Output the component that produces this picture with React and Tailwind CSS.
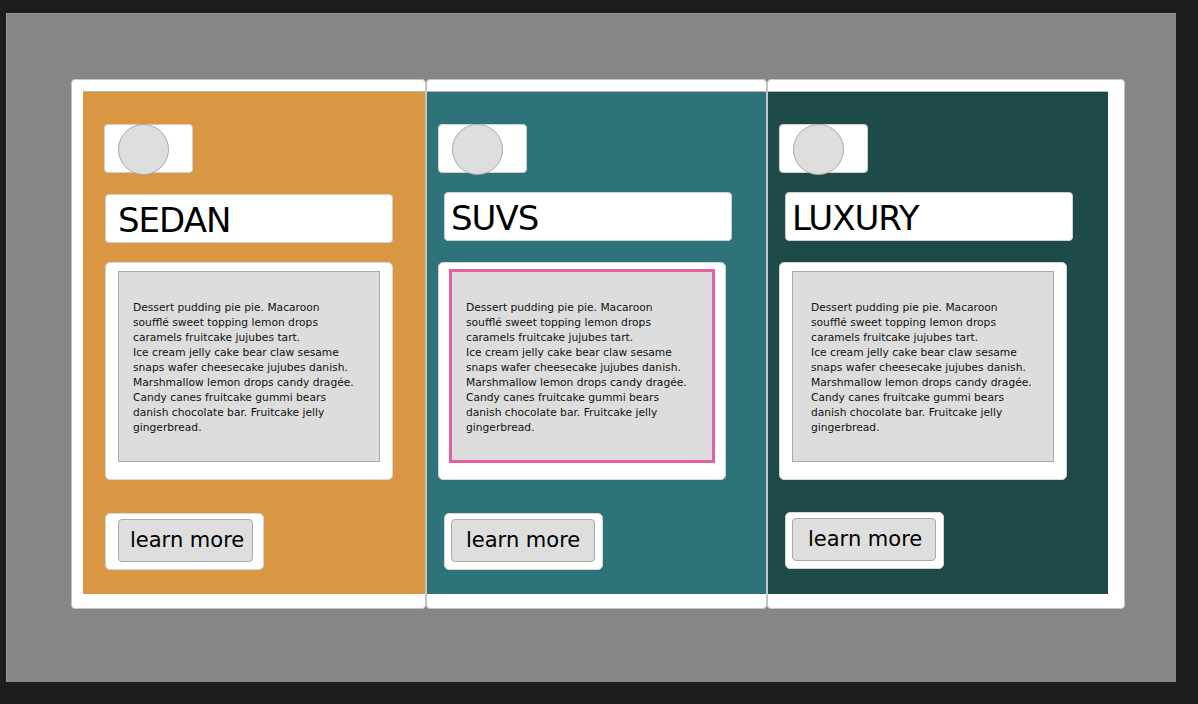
import React from 'react';

const lines = [
  'Dessert pudding pie pie. Macaroon',
  'soufflé sweet topping lemon drops',
  'caramels fruitcake jujubes tart.',
  'Ice cream jelly cake bear claw sesame',
  'snaps wafer cheesecake jujubes danish.',
  'Marshmallow lemon drops candy dragée.',
  'Candy canes fruitcake gummi bears',
  'danish chocolate bar. Fruitcake jelly',
  'gingerbread.',
];

const cards = [
  {
    title: 'SEDAN',
    outer: 'w-[355px] pl-[11px]',
    bg: 'bg-[#da9743]',
    toggle: 'ml-[21px]',
    titleBox: 'mt-[21px] ml-[22px] pl-[12px]',
    desc: 'mt-[19px] ml-[22px]',
    inner: 'ml-[12px] mt-[8px] w-[262px] h-[191px] border border-[#a9a9a9] pl-[14px]',
    btnWrap: 'mt-[33px] ml-[22px]',
    btn: 'ml-[12px] w-[135px] pl-[11px]',
  },
  {
    title: 'SUVS',
    outer: 'w-[341px]',
    bg: 'bg-[#2e727a]',
    toggle: 'ml-[11px]',
    titleBox: 'mt-[19px] ml-[17px] pl-[6px]',
    desc: 'mt-[21px] ml-[11px]',
    inner: 'ml-[10px] mt-[6px] w-[266px] h-[194px] border-[3px] border-[#e2629f] pl-[14px]',
    btnWrap: 'mt-[33px] ml-[17px]',
    btn: 'ml-[6px] w-[144px] pl-[14px]',
  },
  {
    title: 'LUXURY',
    outer: 'w-[358px] pr-[16px]',
    bg: 'bg-[#1e4a4a]',
    toggle: 'ml-[11px]',
    titleBox: 'mt-[19px] ml-[17px] pl-[6px]',
    desc: 'mt-[21px] ml-[11px]',
    inner: 'ml-[12px] mt-[8px] w-[262px] h-[191px] border border-[#a9a9a9] pl-[18px]',
    btnWrap: 'mt-[32px] ml-[17px]',
    btn: 'ml-[6px] w-[144px] pl-[15px]',
  },
];

const Card = ({ card }) => (
  <div className={`${card.outer} h-[530px] bg-white rounded-[4px] border border-[#c4c4c4] pt-[11px] pb-[14px]`}>
    <div className={`${card.bg} h-[503px] border-t border-[#b9b9b9] flex flex-col items-start`}>
      {/* toggle */}
      <div className={`${card.toggle} mt-[32px] w-[89px] h-[49px] bg-white rounded-[4px] border border-[#d0d0d0] flex items-start`}>
        <div className="ml-[13px] -mt-px w-[51px] h-[51px] shrink-0 rounded-full bg-[#dedede] border border-[#a9a9a9]"></div>
      </div>

      <div className={`${card.titleBox} w-[288px] h-[49px] bg-white rounded-[4px] border border-[#cfcfcf] flex items-center`}>
        <span className="text-[34px] tracking-[-1px] leading-none text-black pt-[3px]">{card.title}</span>
      </div>

      <div className={`${card.desc} w-[288px] h-[218px] bg-white rounded-[5px] border border-[#d6d6d6] flex flex-col items-start`}>
        <div className={`${card.inner} bg-[#dddddd] pt-[28px]`}>
          <p className="text-[10.7px] leading-[15px] text-[#111] whitespace-nowrap">
            {lines.map((l, i) => (
              <span key={i} className="block">{l}</span>
            ))}
          </p>
        </div>
      </div>

      <div className={`${card.btnWrap} w-[159px] h-[57px] bg-white rounded-[5px] border border-[#d6d6d6] flex items-start pt-[5px]`}>
        <div className={`${card.btn} h-[43px] bg-[#dedede] rounded-[4px] border border-[#aaaaaa] flex items-center text-[21px] text-black`}>
          learn more
        </div>
      </div>
    </div>
  </div>
);

export default function App() {
  return (
    <div className="w-[1198px] h-[704px] bg-[#1c1d1f] pt-[13px] pl-[6px] overflow-hidden" style={{ fontFamily: '"DejaVu Sans", sans-serif' }}>
      <div className="w-[1170px] h-[669px] bg-[#868686] border-t border-l border-[#989898] pt-[65px] pl-[64px] flex items-start">
        {cards.map((c) => (
          <Card key={c.title} card={c} />
        ))}
      </div>
    </div>
  );
}
